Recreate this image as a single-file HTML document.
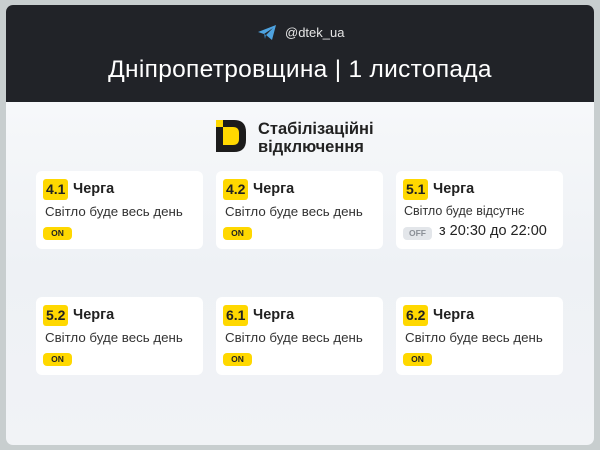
<!DOCTYPE html>
<html><head><meta charset="utf-8"><style>
*{margin:0;padding:0;box-sizing:border-box}
body{width:600px;height:450px;background:#c8cecf;font-family:"Liberation Sans","DejaVu Sans",sans-serif;position:relative;overflow:hidden}
.frame{position:absolute;left:6px;top:5px;width:588px;height:440px;border-radius:7px;overflow:hidden;background:linear-gradient(#fbfcfd,#eef1f5 60%,#f1f3f6)}
.head{position:absolute;left:0;top:0;width:588px;height:97px;background:#212328}
.tg{position:absolute;left:279px;top:20px;color:#e6e6e6;font-size:13px}
.title{position:absolute;left:0;width:588px;top:51px;text-align:center;color:#fff;font-size:24.5px;letter-spacing:0.3px}
.logo{position:absolute;left:210px;top:115px}
.ltxt{position:absolute;left:252px;top:115px;font-size:16.5px;font-weight:bold;color:#222;line-height:18px}
.card{position:absolute;width:167px;height:78px;background:#fff;border-radius:6px}
.b{position:absolute;left:7px;top:8px;height:21px;padding:0 3px;background:#ffd800;border-radius:3px;font-weight:bold;font-size:14px;line-height:21px;color:#222}
.c{position:absolute;top:9px;font-size:14.5px;font-weight:bold;color:#222;line-height:18px}
.t{position:absolute;left:9px;top:33px;font-size:13.3px;color:#333}
.on{position:absolute;left:7px;top:56px;width:29px;height:13px;background:#ffd800;border-radius:4px;font-size:8.5px;font-weight:bold;text-align:center;line-height:13px;color:#222}
</style></head><body>
<div class="frame">
<div class="head">
<svg style="position:absolute;left:251px;top:19px" width="20" height="17" viewBox="0 0 20 17"><path d="M1 8 L19 1 L15 16 L9 11 L16 4 L7 10 Z" fill="#4ea3e0"/><path d="M7 10 L8 15 L9 11Z" fill="#3a86c0"/></svg>
<div class="tg">@dtek_ua</div>
<div class="title">Дніпропетровщина | 1 листопада</div>
</div>
<svg class="logo" width="32" height="32" viewBox="0 0 32 32"><path d="M0 0 H18 Q30 0 30 12 V20 Q30 32 18 32 H0 Z" fill="#1c1c1c"/><path d="M7 7 H17 Q23 7 23 13 V19 Q23 25 17 25 H7 Z" fill="#ffd800"/><rect x="0" y="0" width="7" height="7" fill="#ffd800"/></svg>
<div class="ltxt">Стабілізаційні<br>відключення</div>

<div class="card" style="left:30px;top:166px"><div class="b">4.1</div><div class="c" style="left:37px">Черга</div><div class="t">Світло буде весь день</div><div class="on">ON</div></div>
<div class="card" style="left:210px;top:166px"><div class="b">4.2</div><div class="c" style="left:37px">Черга</div><div class="t">Світло буде весь день</div><div class="on">ON</div></div>
<div class="card" style="left:390px;top:166px"><div class="b">5.1</div><div class="c" style="left:37px">Черга</div><div class="t" style="font-size:12.5px;left:8px">Світло буде відсутнє</div><div class="on" style="background:#e3e6ea;color:#8a8f96;top:56px">OFF</div><div style="position:absolute;left:43px;top:52px;font-size:14.5px;color:#222">з 20:30 до 22:00</div></div>

<div class="card" style="left:30px;top:292px"><div class="b">5.2</div><div class="c" style="left:37px">Черга</div><div class="t">Світло буде весь день</div><div class="on">ON</div></div>
<div class="card" style="left:210px;top:292px"><div class="b">6.1</div><div class="c" style="left:37px">Черга</div><div class="t">Світло буде весь день</div><div class="on">ON</div></div>
<div class="card" style="left:390px;top:292px"><div class="b">6.2</div><div class="c" style="left:37px">Черга</div><div class="t">Світло буде весь день</div><div class="on">ON</div></div>
</div>
</body></html>
